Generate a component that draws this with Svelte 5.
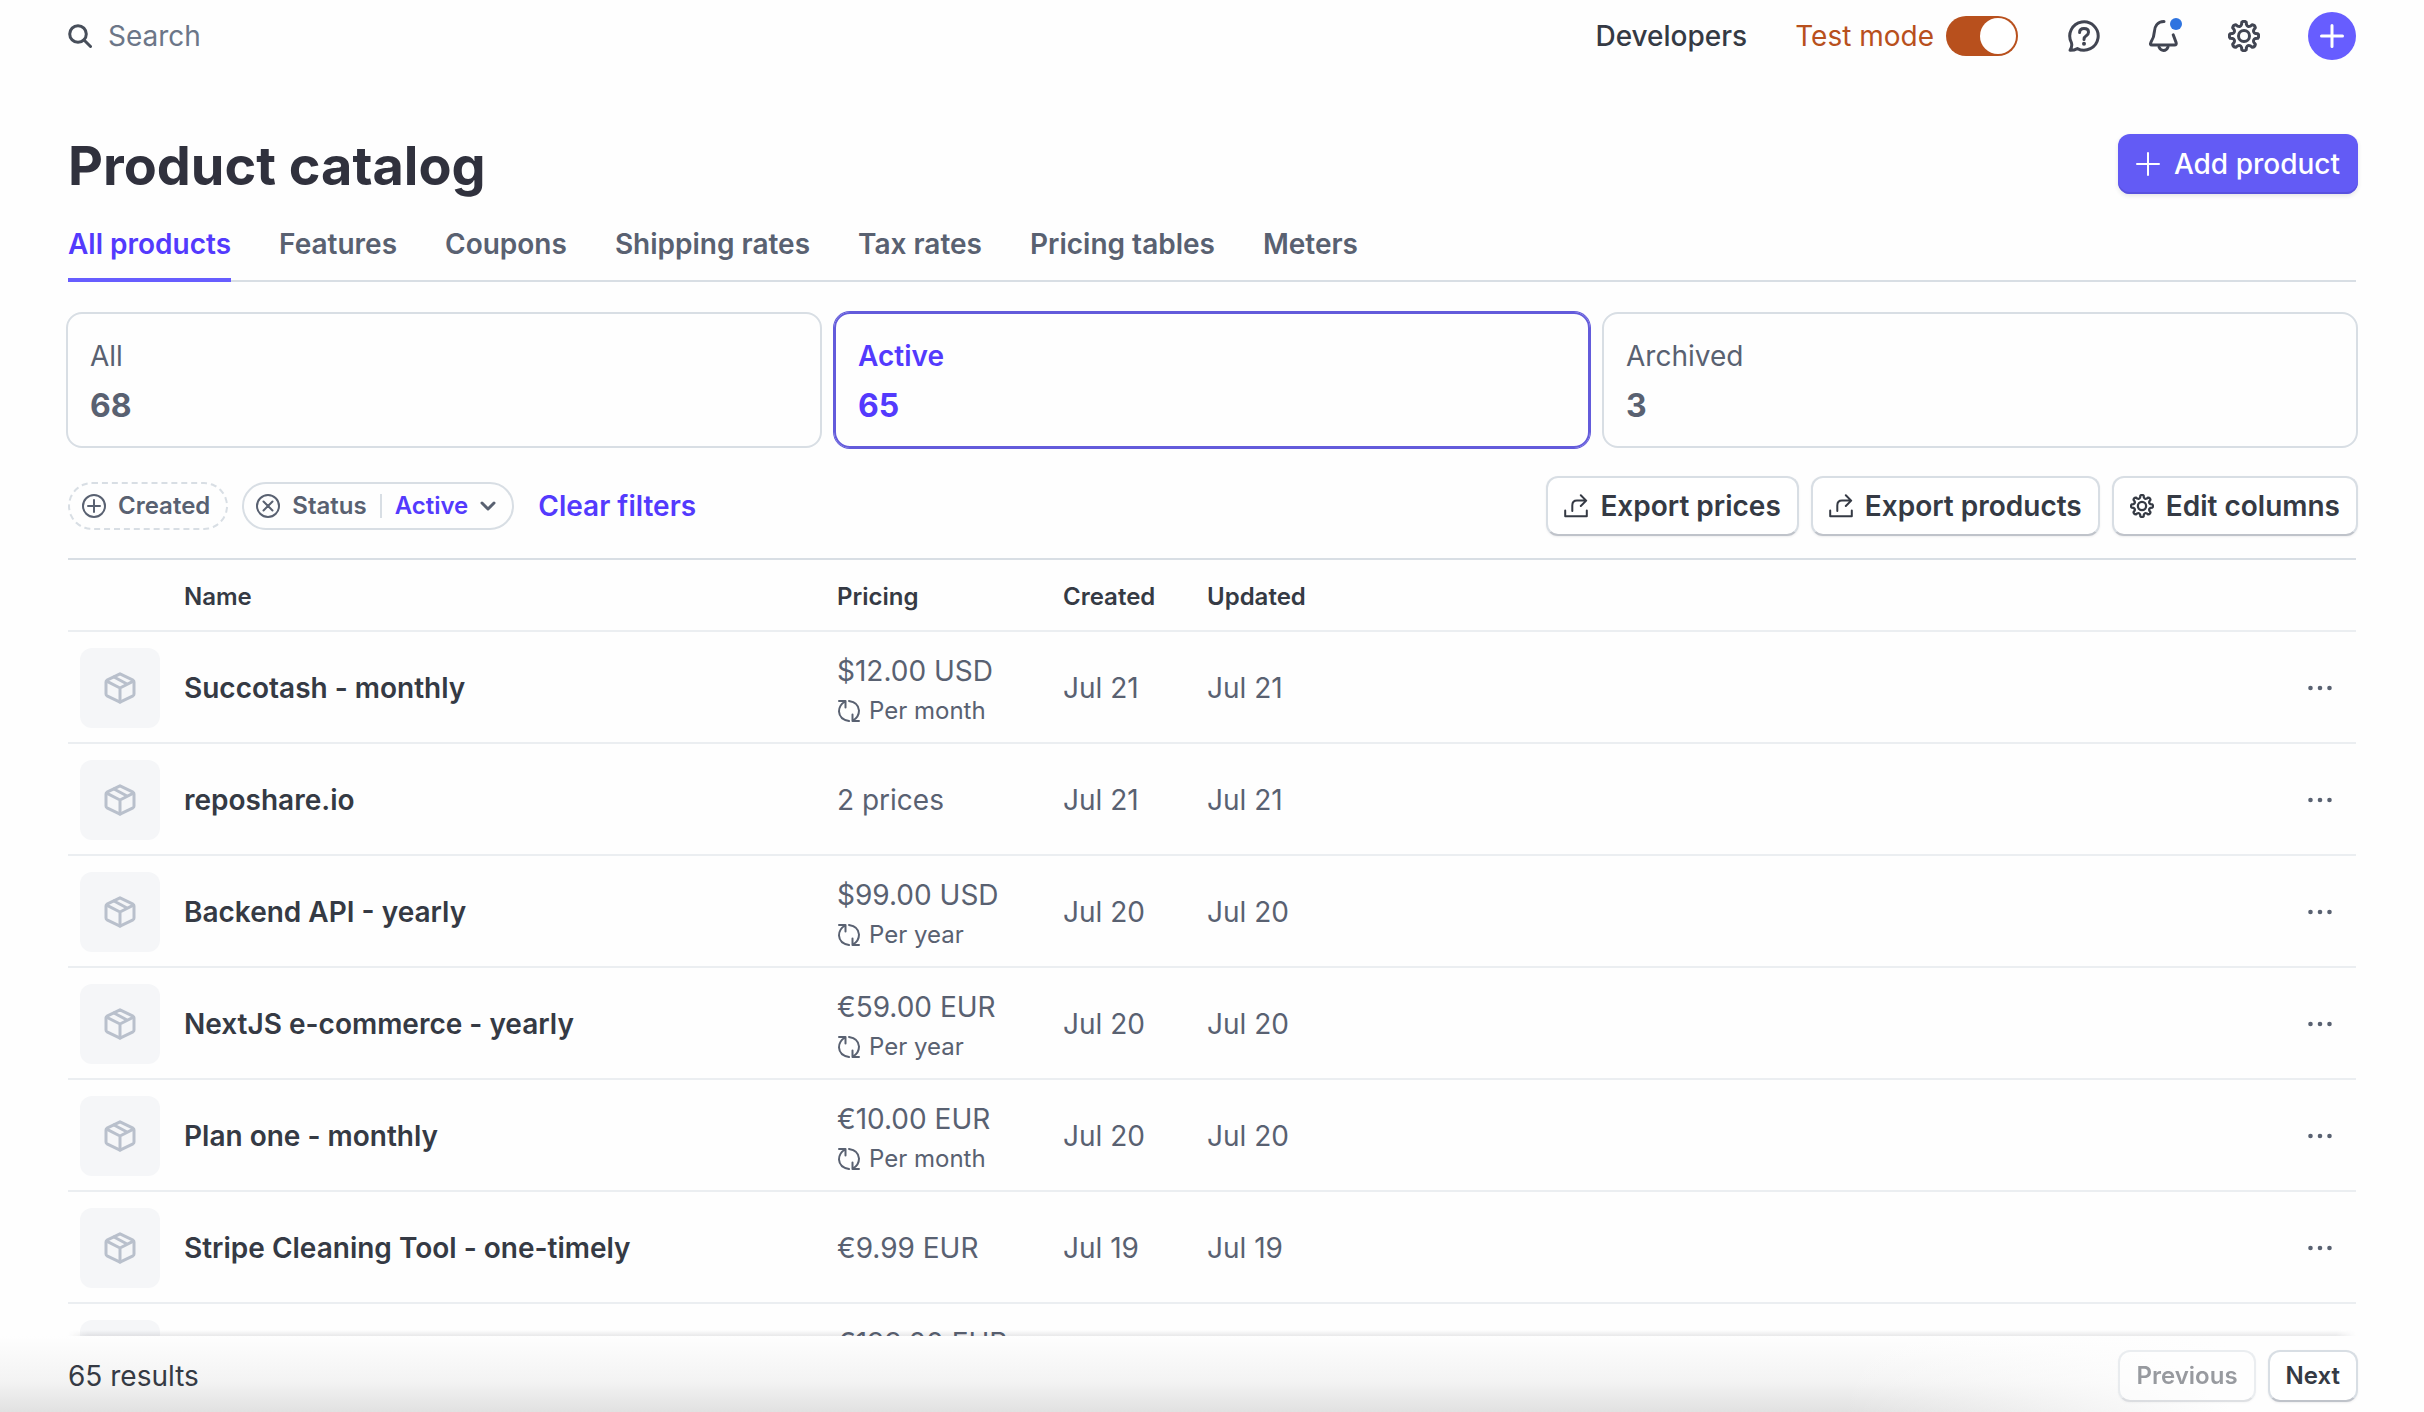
<script lang="ts">
  type Product = {
    name: string;
    price: string;
    interval?: string;
    created: string;
    updated: string;
  };

  const tabs = ['All products', 'Features', 'Coupons', 'Shipping rates', 'Tax rates', 'Pricing tables', 'Meters'];

  const stats = [
    { label: 'All', count: 68 },
    { label: 'Active', count: 65 },
    { label: 'Archived', count: 3 },
  ];

  const products: Product[] = [
    { name: 'Succotash - monthly', price: '$12.00 USD', interval: 'Per month', created: 'Jul 21', updated: 'Jul 21' },
    { name: 'reposhare.io', price: '2 prices', created: 'Jul 21', updated: 'Jul 21' },
    { name: 'Backend API - yearly', price: '$99.00 USD', interval: 'Per year', created: 'Jul 20', updated: 'Jul 20' },
    { name: 'NextJS e-commerce - yearly', price: '€59.00 EUR', interval: 'Per year', created: 'Jul 20', updated: 'Jul 20' },
    { name: 'Plan one - monthly', price: '€10.00 EUR', interval: 'Per month', created: 'Jul 20', updated: 'Jul 20' },
    { name: 'Stripe Cleaning Tool - one-timely', price: '€9.99 EUR', created: 'Jul 19', updated: 'Jul 19' },
    { name: 'Team plan - yearly', price: '€199.00 EUR', interval: 'Per year', created: 'Jul 19', updated: 'Jul 19' },
  ];

  let activeTab = $state('All products');
  let status = $state('Active');
  let testMode = $state(true);

  // Cog outline in a 32x32 box, eight rounded teeth
  function cogPath(): string {
    const at = (deg: number, r: number) => {
      const a = (deg * Math.PI) / 180;
      return `${(16 + r * Math.cos(a)).toFixed(2)} ${(16 + r * Math.sin(a)).toFixed(2)}`;
    };
    let d = '';
    for (let i = 0; i < 8; i++) {
      const a = i * 45;
      d += `${i === 0 ? 'M' : 'L'}${at(a - 9, 14)}Q${at(a, 15.6)} ${at(a + 9, 14)}`;
      d += `L${at(a + 12, 11.8)}Q${at(a + 22.5, 9.4)} ${at(a + 33, 11.8)}`;
    }
    return d + 'Z';
  }
  const cog = cogPath();
</script>

{#snippet cogIcon()}
  <svg viewBox="0 0 32 32" aria-hidden="true">
    <path d={cog} />
    <circle cx="16" cy="16" r="5.5" />
  </svg>
{/snippet}

{#snippet exportIcon()}
  <svg class="icon-24" viewBox="0 0 24 24" aria-hidden="true">
    <path d="M1.2 16.5V22.2H22.8V16.5M8.3 17V11.5Q8.3 6.6 13 6.6H22M16.8 1.2L22.2 6.6L16.8 12" />
  </svg>
{/snippet}

<div class="page">
  <header class="topbar">
    <label class="search">
      <svg viewBox="0 0 24 24" aria-hidden="true">
        <circle cx="10" cy="10" r="8.3" />
        <path d="M16 16L22.5 22.5" />
      </svg>
      <input type="text" placeholder="Search" aria-label="Search" />
    </label>
    <nav class="top-actions">
      <a class="developers" href="#developers">Developers</a>
      <label class="test-mode">
        Test mode
        <input type="checkbox" bind:checked={testMode} />
      </label>
      <button class="icon-button" aria-label="Help">
        <svg viewBox="0 0 32 32">
          <path d="M3.4 22.6A14.2 14.2 0 1 1 9.4 28.6Q6 30.4 2 30.3Q4.6 26.4 3.4 22.6Z" />
          <path d="M11.6 12.6Q11.6 8.6 16 8.6Q20.5 8.6 20.5 12.2Q20.5 14.2 18.2 15.8Q16 17.2 16 19.4" />
          <circle class="solid" cx="16" cy="23.8" r="2" />
        </svg>
      </button>
      <button class="icon-button" aria-label="Notifications">
        <svg viewBox="0 0 32 32">
          <path d="M16 1.5C9 1.5 6.6 7 6.4 11.5C6.2 17 4.6 19.6 2.9 22.4C2 24 2.4 25 4 25H26.5C28 25 28.6 24 28.1 22.6L25.2 14.8" />
          <path d="M11 27Q12.6 30.5 15.6 30.5Q18.6 30.5 20 27" />
        </svg>
        <span class="unread"></span>
      </button>
      <button class="icon-button" aria-label="Settings">{@render cogIcon()}</button>
      <button class="create" aria-label="Create">
        <svg viewBox="0 0 24 24"><path d="M12 1.5V22.5M1.5 12H22.5" /></svg>
      </button>
    </nav>
  </header>

  <main>
    <div class="title-row">
      <h1>Product catalog</h1>
      <button class="add-product">
        <svg class="icon-24" viewBox="0 0 24 24" aria-hidden="true"><path d="M12 1V23M1 12H23" /></svg>
        Add product
      </button>
    </div>

    <nav class="tabs">
      {#each tabs as tab}
        <a href="#catalog" class:active={tab === activeTab} onclick={() => (activeTab = tab)}>{tab}</a>
      {/each}
    </nav>

    <div class="stats">
      {#each stats as stat}
        <button class="stat" class:selected={stat.label === status} onclick={() => (status = stat.label)}>
          <span>{stat.label}</span>
          <strong>{stat.count}</strong>
        </button>
      {/each}
    </div>

    <div class="toolbar">
      <div class="filters">
        <button class="chip dashed">
          <svg class="icon-24" viewBox="0 0 24 24" aria-hidden="true">
            <circle cx="12" cy="12" r="11" />
            <path d="M12 6V18M6 12H18" />
          </svg>
          Created
        </button>
        <div class="chip">
          <button class="remove" aria-label="Remove status filter">
            <svg class="icon-24" viewBox="0 0 24 24">
              <circle cx="12" cy="12" r="11" />
              <path d="M7.5 7.5L16.5 16.5M16.5 7.5L7.5 16.5" />
            </svg>
          </button>
          <label for="status">Status</label>
          <span class="divider"></span>
          <select id="status" bind:value={status}>
            {#each stats as stat}
              <option value={stat.label}>{stat.label}</option>
            {/each}
          </select>
          <svg class="chevron" viewBox="0 0 16 16" aria-hidden="true"><path d="M2 5L8 11L14 5" /></svg>
        </div>
        <button class="clear">Clear filters</button>
      </div>
      <div class="exports">
        <button class="outlined">{@render exportIcon()} Export prices</button>
        <button class="outlined">{@render exportIcon()} Export products</button>
        <button class="outlined edit">{@render cogIcon()} Edit columns</button>
      </div>
    </div>

    <table>
      <colgroup>
        <col class="col-thumb" />
        <col class="col-name" />
        <col class="col-price" />
        <col class="col-date" />
        <col />
        <col class="col-more" />
      </colgroup>
      <thead>
        <tr>
          <th></th>
          <th>Name</th>
          <th>Pricing</th>
          <th>Created</th>
          <th>Updated</th>
          <th></th>
        </tr>
      </thead>
      <tbody>
        {#each products as product}
          <tr>
            <td>
              <div class="thumb">
                <svg viewBox="0 0 32 32" aria-hidden="true">
                  <path d="M16 1.8L29 8.2Q30 8.8 30 10V22Q30 23.2 29 23.8L16 30.2L3 23.8Q2 23.2 2 22V10Q2 8.8 3 8.2Z" />
                  <path d="M2.6 9.2L16 16L29.4 9.2M16 16V30M10 5L23 12" />
                </svg>
              </div>
            </td>
            <td class="name">{product.name}</td>
            <td class:recurring={product.interval}>
              <div>{product.price}</div>
              {#if product.interval}
                <div class="interval">
                  <svg class="icon-24" viewBox="0 0 24 24" aria-hidden="true">
                    <path d="M2 2H8.5V8.5M8 2.5Q2 6 2 12.5Q2.5 20.5 12 22M22 22H15.5V15.5M16 21.5Q22 18 22 11.5Q21.5 3.5 12 2" />
                  </svg>
                  {product.interval}
                </div>
              {/if}
            </td>
            <td>{product.created}</td>
            <td>{product.updated}</td>
            <td class="more">
              <button aria-label="More actions for {product.name}">
                <svg class="icon-24" viewBox="0 0 24 24">
                  <circle cx="2.5" cy="12" r="2.3" />
                  <circle cx="12" cy="12" r="2.3" />
                  <circle cx="21.5" cy="12" r="2.3" />
                </svg>
              </button>
            </td>
          </tr>
        {/each}
      </tbody>
    </table>
  </main>

  <footer>
    <span>65 results</span>
    <div class="pager">
      <button class="outlined small" disabled>Previous</button>
      <button class="outlined small">Next</button>
    </div>
  </footer>
</div>

<style>
  :global(body) {
    margin: 0;
    background: #fefefe;
  }
  .page {
    height: 100vh;
    display: flex;
    flex-direction: column;
    overflow: hidden;
    font-family: Inter, 'Liberation Sans', sans-serif;
    font-size: 28px;
    line-height: 40px;
    color: #596171;
  }
  button,
  input,
  select {
    font: inherit;
    color: inherit;
    margin: 0;
    padding: 0;
    border: 0;
    background: none;
  }
  button {
    cursor: pointer;
  }
  a {
    color: inherit;
    text-decoration: none;
  }
  svg {
    display: block;
    flex: none;
    fill: none;
    stroke: currentColor;
    stroke-width: 2;
    stroke-linecap: round;
    stroke-linejoin: round;
  }
  .icon-24 {
    width: 24px;
    height: 24px;
  }

  .topbar {
    flex: none;
    height: 72px;
    padding: 0 68px;
    display: flex;
    align-items: center;
    justify-content: space-between;
  }
  .search {
    display: flex;
    align-items: center;
    gap: 16px;
    color: #474e5a;
  }
  .search svg {
    width: 24px;
    height: 24px;
    stroke-width: 3;
  }
  .search input {
    outline: 0;
  }
  .search input::placeholder {
    color: #6c7688;
    opacity: 1;
  }
  .top-actions {
    display: flex;
    align-items: center;
    gap: 48px;
    color: #414552;
  }
  .developers {
    font-weight: 500;
    color: #353a44;
  }
  .test-mode {
    margin-right: 2px;
    display: flex;
    align-items: center;
    gap: 12px;
    color: #b8501d;
  }
  .test-mode input {
    appearance: none;
    box-sizing: border-box;
    width: 72px;
    height: 40px;
    padding: 2px;
    border-radius: 20px;
    background: #b8501d;
    display: flex;
    justify-content: flex-end;
  }
  .test-mode input::before {
    content: '';
    width: 36px;
    height: 36px;
    border-radius: 50%;
    background: #fff;
  }
  .test-mode input:not(:checked) {
    justify-content: flex-start;
    background: #a3acba;
  }
  .icon-button {
    position: relative;
    width: 32px;
    height: 32px;
  }
  .icon-button svg {
    width: 32px;
    height: 32px;
    stroke-width: 3;
  }
  .icon-button .solid {
    fill: currentColor;
    stroke: none;
  }
  .unread {
    position: absolute;
    top: -2px;
    right: -2px;
    width: 12px;
    height: 12px;
    border-radius: 50%;
    background: #2f74e0;
  }
  .create {
    width: 48px;
    height: 48px;
    border-radius: 50%;
    display: grid;
    place-items: center;
    background: #675dff;
    color: #fff;
  }
  .create svg {
    width: 24px;
    height: 24px;
    stroke-width: 3;
  }

  main {
    flex: 1;
    min-height: 0;
    overflow-y: auto;
    scrollbar-width: none;
    padding: 60px 66px 0;
  }
  .title-row {
    display: flex;
    align-items: flex-start;
    justify-content: space-between;
  }
  h1 {
    margin: 0 2px;
    font-size: 54px;
    line-height: 68px;
    font-weight: 700;
    color: #30313d;
  }
  .add-product {
    height: 60px;
    margin-top: 2px;
    padding: 0 18px;
    border-radius: 12px;
    display: flex;
    align-items: center;
    gap: 14px;
    background: #635bf5;
    box-shadow: inset 0 -2px 0 #5851df, 0 2px 4px rgba(48, 49, 61, 0.12);
    color: #fff;
    font-weight: 500;
  }
  .tabs {
    margin: 0 2px;
    display: flex;
    gap: 48px;
    box-shadow: inset 0 -2px 0 #d8dee4;
    font-weight: 600;
  }
  .tabs a {
    padding: 24px 0 14px;
    border-bottom: 4px solid transparent;
  }
  .tabs a.active {
    color: #533afd;
    border-color: #675dff;
  }
  .stats {
    margin-top: 30px;
    display: grid;
    grid-template-columns: repeat(3, 1fr);
    gap: 12px;
  }
  .stat {
    height: 136px;
    padding: 2px 22px 0;
    border: 2px solid #d8dee4;
    border-radius: 16px;
    display: flex;
    flex-direction: column;
    justify-content: center;
    gap: 10px;
    text-align: left;
  }
  .stat strong {
    font-size: 32px;
  }
  .stat.selected {
    border-color: #635bdb;
    box-shadow: 0 0 0 1px #635bdb;
    color: #533afd;
  }
  .stat.selected span {
    font-weight: 600;
  }

  .toolbar {
    margin-top: 28px;
    display: flex;
    align-items: center;
    justify-content: space-between;
  }
  .filters,
  .exports {
    display: flex;
    align-items: center;
    gap: 12px;
  }
  .filters {
    gap: 14px;
    margin-left: 2px;
  }
  .chip {
    box-sizing: border-box;
    height: 48px;
    padding: 0 16px 0 12px;
    border: 2px solid #d8dee4;
    border-radius: 24px;
    display: flex;
    align-items: center;
    gap: 12px;
    font-size: 24px;
    font-weight: 600;
  }
  .chip.dashed {
    border-style: dashed;
  }
  .divider {
    width: 2px;
    height: 24px;
    margin: 0 1px;
    background: #d8dee4;
  }
  .chip select {
    appearance: none;
    field-sizing: content;
    color: #533afd;
  }
  .chip .chevron {
    width: 16px;
    height: 16px;
    stroke-width: 3;
  }
  .clear {
    margin-left: 10px;
    font-weight: 600;
    color: #533afd;
  }
  .outlined {
    box-sizing: border-box;
    height: 60px;
    padding: 0 16px;
    border: 2px solid #d8dee4;
    border-bottom-color: #bfc3ca;
    border-radius: 12px;
    display: flex;
    align-items: center;
    gap: 12px;
    background: #fff;
    box-shadow: 0 1px 2px rgba(48, 49, 61, 0.08);
    color: #353a44;
    font-weight: 600;
  }
  .outlined.edit svg {
    width: 24px;
    height: 24px;
    stroke-width: 3;
  }
  .outlined.small {
    height: 52px;
    font-size: 24px;
  }
  .outlined:disabled {
    opacity: 0.5;
  }

  table {
    width: calc(100% - 4px);
    margin: 22px 2px 0;
    border-collapse: separate;
    border-spacing: 0;
    border-top: 2px solid #d8dee4;
    table-layout: fixed;
  }
  .col-thumb {
    width: 104px;
  }
  .col-name {
    width: 653px;
  }
  .col-price {
    width: 226px;
  }
  .col-date {
    width: 144px;
  }
  .col-more {
    width: 80px;
  }
  th,
  td {
    box-sizing: border-box;
    padding: 4px 12px 0;
    border-bottom: 2px solid #ebeef1;
    text-align: left;
    white-space: nowrap;
  }
  th {
    height: 72px;
    font-size: 24px;
    font-weight: 600;
    color: #353a44;
  }
  td {
    height: 112px;
    padding-top: 2px;
  }
  .recurring {
    padding-top: 8px;
  }
  .name {
    font-weight: 600;
    color: #353a44;
  }
  .thumb {
    width: 80px;
    height: 80px;
    border-radius: 12px;
    display: grid;
    place-items: center;
    background: #f5f6f8;
    color: #b9c0cc;
  }
  .thumb svg {
    width: 32px;
    height: 32px;
    stroke-width: 3;
  }
  .interval {
    display: flex;
    align-items: center;
    gap: 8px;
    font-size: 24px;
  }
  .more button {
    display: block;
    margin-left: auto;
    padding: 12px;
  }
  .more circle {
    fill: currentColor;
    stroke: none;
  }

  footer {
    position: relative;
    box-sizing: border-box;
    flex: none;
    height: 76px;
    padding: 4px 66px 0 68px;
    display: flex;
    align-items: center;
    justify-content: space-between;
    color: #353a44;
    background:
      linear-gradient(to right, transparent 76%, #fefefe 92%),
      linear-gradient(to bottom, #fefefe, #f3f3f3 60%, #e1e1e1);
  }
  footer::before {
    content: '';
    position: absolute;
    right: 68px;
    bottom: 100%;
    left: 68px;
    height: 6px;
    background: linear-gradient(to top, rgba(48, 49, 61, 0.1), transparent);
    mask-image: linear-gradient(to right, transparent, #000 20px, #000 calc(100% - 20px), transparent);
  }
  .pager {
    display: flex;
    gap: 12px;
  }
</style>
